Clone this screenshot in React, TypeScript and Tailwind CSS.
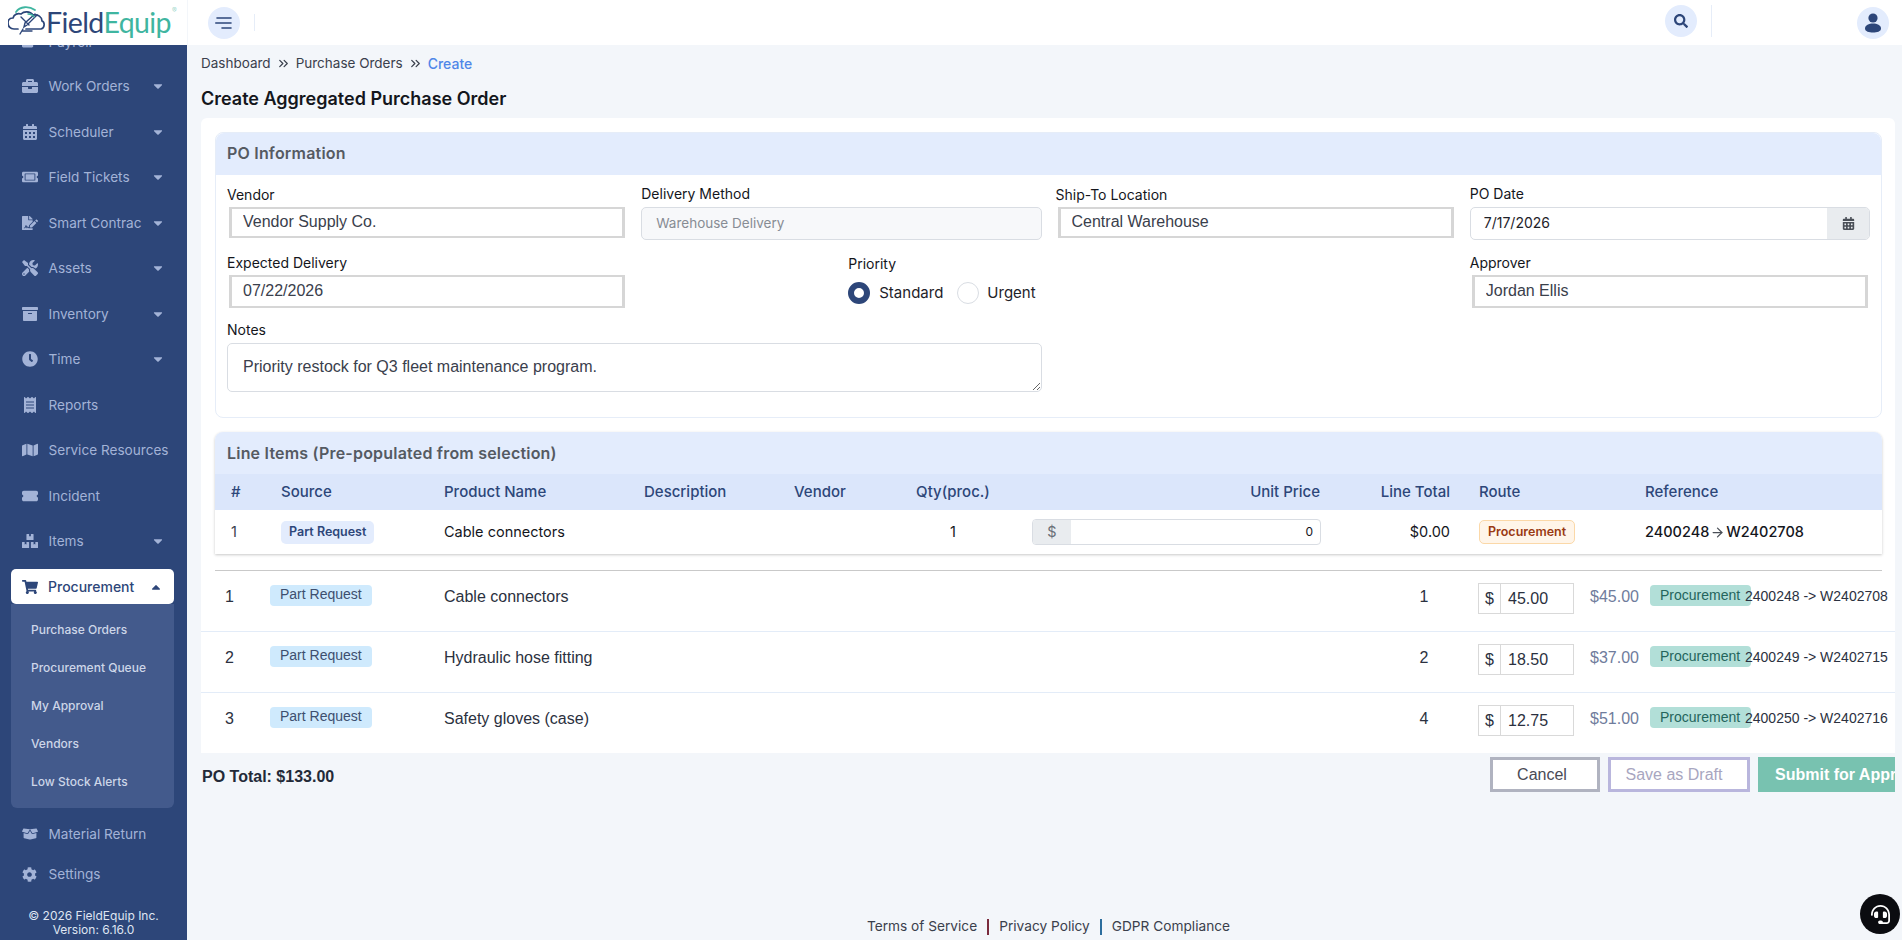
import React from 'react';
import {
  FaArchive,
  FaBoxes,
  FaBoxOpen,
  FaBriefcase,
  FaCalendarAlt,
  FaCaretDown,
  FaCaretUp,
  FaClock,
  FaCog,
  FaFileSignature,
  FaHeadset,
  FaMap,
  FaReceipt,
  FaSearch,
  FaShoppingCart,
  FaTicketAlt,
  FaTools,
  FaUserCheck,
} from 'react-icons/fa';
import { FaTicketSimple } from 'react-icons/fa6';
import { LuChevronsRight, LuArrowRight } from 'react-icons/lu';

const UI = "font-['Inter',sans-serif]";
const ARIAL = "font-['Liberation_Sans',Arial,sans-serif]";

const navTop = [
  { label: 'Work Orders', icon: FaBriefcase, caret: true },
  { label: 'Scheduler', icon: FaCalendarAlt, caret: true },
  { label: 'Field Tickets', icon: FaTicketAlt, caret: true },
  { label: 'Smart Contrac', icon: FaFileSignature, caret: true },
  { label: 'Assets', icon: FaTools, caret: true },
  { label: 'Inventory', icon: FaArchive, caret: true },
  { label: 'Time', icon: FaClock, caret: true },
  { label: 'Reports', icon: FaReceipt, caret: false },
  { label: 'Service Resources', icon: FaMap, caret: false },
  { label: 'Incident', icon: FaTicketSimple, caret: false },
  { label: 'Items', icon: FaBoxes, caret: true },
];

const subNav = ['Purchase Orders', 'Procurement Queue', 'My Approval', 'Vendors', 'Low Stock Alerts'];

const poLines = [
  { no: 1, name: 'Cable connectors', qty: 1, price: '45.00', total: '$45.00', ref: '2400248 -> W2402708' },
  { no: 2, name: 'Hydraulic hose fitting', qty: 2, price: '18.50', total: '$37.00', ref: '2400249 -> W2402715' },
  { no: 3, name: 'Safety gloves (case)', qty: 4, price: '12.75', total: '$51.00', ref: '2400250 -> W2402716' },
];

function Logo() {
  return (
    <div className="relative z-10 flex h-[45px] w-[187px] shrink-0 items-start overflow-hidden bg-white pl-[8px] pt-[5px]">
      <svg width="38" height="31" viewBox="0 0 38 31" fill="none" className="shrink-0">
        <path d="M8 7 C12 1 21 1 27 5" stroke="#3fb5a0" strokeWidth="1.8" strokeLinecap="round" />
        <path
          d="M10 24 H6 C2 24 0 21 0 18 C0 15 2 13 5 13 C6 9 10 8 13 9 C16 6 22 6 25 10 C30 9 34 12 34 16 C37 17 37 23 33 24 H18"
          stroke="#2d4679"
          strokeWidth="1.7"
          strokeLinecap="round"
        />
        <path d="M13 12 L21 20 M29 10 L19 20 L16 22 L17 18 L27 9" stroke="#2d4679" strokeWidth="1.4" strokeLinecap="round" />
        <path d="M20 9 C23 9 25 10 26 12" stroke="#3fb5a0" strokeWidth="1.4" strokeLinecap="round" />
        <path d="M14 26 H24 M12 29 L15 24" stroke="#2d4679" strokeWidth="1.4" strokeLinecap="round" />
      </svg>
      <span className="mt-[-1px] font-['Lato',sans-serif] text-[28.5px] leading-[36px] font-normal tracking-[-0.6px]">
        <span className="text-[#2d4679]">Field</span>
        <span className="text-[#3fb5a0]">Equip</span>
      </span>
      <span className="ml-[1px] mt-[1px] text-[7px] text-[#9fd8cd]">®</span>
    </div>
  );
}

function NavItem({ label, icon: Icon, caret }: { label: string; icon: React.ElementType; caret: boolean }) {
  return (
    <div className="flex h-[45.5px] items-center pl-[22px] pr-[22px] text-[#a3b3d7]">
      <span className="flex w-[26.5px] shrink-0 items-center">
        <Icon className="text-[16px]" />
      </span>
      <span className="flex-1 whitespace-nowrap text-[13.6px]">{label}</span>
      {caret && <FaCaretDown className="text-[14px]" />}
    </div>
  );
}

function Sidebar() {
  return (
    <aside className={`flex w-[187px] shrink-0 flex-col overflow-hidden ${UI}`}>
      <Logo />
      <nav className="flex h-[895px] flex-col overflow-hidden bg-[#2d4679]">
        {/* list is scrolled, only the foot of the first item shows under the logo */}
        <div className="flex h-[18.5px] shrink-0 items-end overflow-hidden pb-[15px] pl-[22px] text-[#a3b3d7]">
          <span className="flex w-[26.5px] shrink-0 items-center">
            <FaUserCheck className="text-[16px]" />
          </span>
          <span className="text-[13.6px] leading-[14px]">Payroll</span>
        </div>
        <div>
          {navTop.map((item) => (
            <NavItem key={item.label} {...item} />
          ))}
        </div>
        <div className="ml-[11px] mr-[13px] mt-[5px] flex h-[35px] shrink-0 items-center rounded-[5px] bg-white pl-[11px] pr-[11px] text-[#2d4679]">
          <FaShoppingCart className="mr-[10px] text-[16px]" />
          <span className="flex-1 text-[14px] font-medium">Procurement</span>
          <FaCaretUp className="text-[14px]" />
        </div>
        <div className="ml-[11px] mr-[13px] flex h-[204px] shrink-0 flex-col rounded-b-[6px] bg-[#435a8c] pl-[20px] pt-[7px]">
          {subNav.map((s) => (
            <div key={s} className="flex h-[38px] items-center text-[12px] font-medium text-[#cdd6e8]">
              {s}
            </div>
          ))}
        </div>
        <div className="mt-[4px]">
          <div className="flex h-[44px] items-center pl-[22px] text-[#a3b3d7]">
            <span className="flex w-[26.5px] items-center">
              <FaBoxOpen className="text-[16px]" />
            </span>
            <span className="text-[13.6px]">Material Return</span>
          </div>
          <div className="flex h-[36px] items-center pl-[22px] text-[#a3b3d7]">
            <span className="flex w-[26.5px] items-center">
              <FaCog className="text-[15px]" />
            </span>
            <span className="text-[13.6px]">Settings</span>
          </div>
        </div>
        <div className="mt-[17px] text-center text-[12px] leading-[14px] text-[#dfe5f2]">
          <div>© 2026 FieldEquip Inc.</div>
          <div>Version: 6.16.0</div>
        </div>
      </nav>
    </aside>
  );
}

function Header() {
  return (
    <header className="flex h-[45px] shrink-0 items-center border-l border-[#f3f6fa] bg-white pl-[20px] pr-[13px]">
      <div className="flex h-[32px] w-[32px] items-center justify-center rounded-full bg-[#e3ecfd]">
        <svg width="18" height="12" viewBox="0 0 18 12" fill="none" stroke="#2d4679" strokeWidth="1.6" strokeLinecap="round">
          <path d="M2 1 H16 M0.8 6 H16 M7 11 H16" />
        </svg>
      </div>
      <div className="ml-[14px] h-[17px] w-px bg-[#e6edf8]" />
      <div className="flex-1" />
      <div className="mb-[4px] flex h-[32px] w-[32px] items-center justify-center rounded-full bg-[#e3ecfd] text-[#2d4679]">
        <FaSearch className="text-[14px]" />
      </div>
      <div className="mb-[4px] ml-[14px] h-[32px] w-px bg-[#e6edf8]" />
      <div className="ml-[145px] flex h-[32px] w-[32px] items-center justify-center rounded-full bg-[#e3ecfd]">
        <svg width="18" height="20" viewBox="0 0 18 20" fill="#2d4679">
          <circle cx="9" cy="5" r="4.6" />
          <path d="M1 15.5 C1 12 5 10.5 9 10.5 C13 10.5 17 12 17 15.5 C17 18.5 13 19.5 9 19.5 C5 19.5 1 18.5 1 15.5 Z" />
        </svg>
      </div>
    </header>
  );
}

function Label({ children, className = '' }: { children: React.ReactNode; className?: string }) {
  return <div className={`h-[20px] text-[14px] leading-[20px] text-[#14161c] ${className}`}>{children}</div>;
}

function PlainInput({ value, tall = false }: { value: string; tall?: boolean }) {
  return (
    <input
      readOnly
      value={value}
      className={`mx-[2px] block w-[396px] border-x-[3px] border-y-2 border-[#d6d6d6] bg-white pl-[11px] text-[16px] text-[#3a404c] outline-none ${
        tall ? 'h-[33px] pb-[2px]' : 'h-[31px] pb-[1px]'
      } ${ARIAL}`}
    />
  );
}

function PoInformation() {
  return (
    <section className="rounded-[8px] border border-[#e6edf8] bg-white">
      <div className="flex h-[42px] items-center rounded-t-[8px] bg-[#e3ecfd] pb-[2px] pl-[11px] text-[16px] font-semibold tracking-[0.2px] text-[#555a62]">
        PO Information
      </div>
      <div className="grid grid-cols-4 gap-x-[14px] px-[11px] pb-[25px] pt-[10px]">
        <div>
          <Label className="mb-[2px]">Vendor</Label>
          <PlainInput value="Vendor Supply Co." />
        </div>
        <div>
          <Label className="mb-[3px] mt-[-1px]">Delivery Method</Label>
          <input
            readOnly
            value="Warehouse Delivery"
            className="block h-[33px] w-full rounded-[5px] border border-[#d9dde3] bg-[#f7f8fa] pb-[2px] pl-[14px] text-[13.5px] text-[#878c94] outline-none"
          />
        </div>
        <div>
          <Label className="mb-[2px]">Ship-To Location</Label>
          <PlainInput value="Central Warehouse" />
        </div>
        <div>
          <Label className="mb-[3px] mt-[-1px]">PO Date</Label>
          <div className="flex h-[33px] overflow-hidden rounded-[5px] border border-[#d9dde3]">
            <input readOnly value="7/17/2026" className="min-w-0 flex-1 pb-[2px] pl-[13px] text-[14px] text-[#1e2229] outline-none" />
            <div className="flex w-[42px] items-center justify-center bg-[#e9ecef] text-[#4a4f57]">
              <FaCalendarAlt className="text-[13px]" />
            </div>
          </div>
        </div>

        <div className="mt-[13px]">
          <Label className="mb-[2px]">Expected Delivery</Label>
          <PlainInput value="07/22/2026" tall />
        </div>
        <div className="mt-[13px] pl-[207px]">
          <Label className="mt-[1px]">Priority</Label>
          <div className="mt-[8px] flex items-center text-[15px] text-[#1e2229]">
            <span className="h-[22px] w-[22px] shrink-0 rounded-full border-[6px] border-[#2d4679] bg-white" />
            <span className="ml-[9px]">Standard</span>
            <span className="ml-[14px] h-[22px] w-[22px] shrink-0 rounded-full border border-[#d9dde3] bg-white" />
            <span className="ml-[8px]">Urgent</span>
          </div>
        </div>
        <div className="mt-[13px]" />
        <div className="mt-[13px]">
          <Label className="mb-[2px]">Approver</Label>
          <PlainInput value="Jordan Ellis" tall />
        </div>

        <div className="col-span-2 mt-[12px]">
          <Label className="mb-[3px]">Notes</Label>
          <textarea
            readOnly
            value="Priority restock for Q3 fleet maintenance program."
            className={`block h-[49px] w-full rounded-[5px] border border-[#d9dde3] pb-[11px] pl-[15px] pt-[12px] text-[16px] leading-[22px] text-[#3a404c] outline-none ${ARIAL}`}
          />
        </div>
      </div>
    </section>
  );
}

function LineItemsTable() {
  return (
    <section className="mt-[14px] rounded-t-[8px] bg-white shadow-[0_1px_3px_rgba(0,0,0,0.22)]">
      <div className="flex h-[42px] items-center rounded-t-[8px] bg-[#e3ecfd] pb-[1px] pl-[12px] text-[16px] font-semibold tracking-[0.2px] text-[#555a62]">
        Line Items (Pre-populated from selection)
      </div>
      <table className="w-full table-fixed border-collapse text-[14.5px]">
        <colgroup>
          <col className="w-[54px]" />
          <col className="w-[163px]" />
          <col className="w-[200px]" />
          <col className="w-[150px]" />
          <col className="w-[111px]" />
          <col className="w-[120px]" />
          <col className="w-[319px]" />
          <col className="w-[135px]" />
          <col className="w-[166px]" />
          <col />
        </colgroup>
        <thead>
          <tr className="h-[36px] bg-[#dbe6fb] text-left text-[15px] text-[#2d4679]">
            <th className="pl-[16px] font-medium">#</th>
            <th className="pl-[12px] font-medium">Source</th>
            <th className="pl-[12px] font-medium">Product Name</th>
            <th className="pl-[12px] font-medium">Description</th>
            <th className="pl-[12px] font-medium">Vendor</th>
            <th className="text-center font-medium">Qty(proc.)</th>
            <th className="pr-[12px] text-right font-medium">Unit Price</th>
            <th className="pr-[17px] text-right font-medium">Line Total</th>
            <th className="pl-[12px] font-medium">Route</th>
            <th className="pl-[12px] font-medium">Reference</th>
          </tr>
        </thead>
        <tbody>
          <tr className="h-[44px] text-[#14161c]">
            <td className="pl-[16px] text-[#3a404c]">1</td>
            <td className="pl-[12px]">
              <span className="inline-block rounded-[5px] bg-[#e3ecfd] px-[8px] py-[2px] text-[12.5px] font-semibold text-[#2d4679]">
                Part Request
              </span>
            </td>
            <td className="pl-[12px]">Cable connectors</td>
            <td />
            <td />
            <td className="text-center">1</td>
            <td className="pl-[19px] pr-[11px]">
              <div className="flex h-[26px] overflow-hidden rounded-[4px] border border-[#d9dde3]">
                <span className="flex w-[38px] items-center justify-center bg-[#e9ecef] text-[#6a6f77]">$</span>
                <span className="flex flex-1 items-center justify-end pr-[7px] text-[12px]">0</span>
              </div>
            </td>
            <td className="pr-[17px] text-right">$0.00</td>
            <td className="pl-[12px]">
              <span className="inline-block rounded-[5px] border border-[#fbd8a8] bg-[#fff5e9] px-[8px] py-[2px] text-[12.5px] font-semibold text-[#9a3a12]">
                Procurement
              </span>
            </td>
            <td className="pl-[12px]">
              <span className="inline-flex items-center font-medium">
                2400248
                <LuArrowRight className="mx-[1px] text-[15px] text-[#4a4f57]" />
                W2402708
              </span>
            </td>
          </tr>
        </tbody>
      </table>
    </section>
  );
}

function PoLines() {
  return (
    <div className={`ml-[-14px] mr-[-13px] ${ARIAL}`}>
      <div className="ml-[14px] mr-[13px] h-px bg-[#c9c9c9]" />
      {poLines.map((l, i) => (
        <div key={l.no} className={`flex items-start ${i === 0 ? 'h-[60px]' : 'h-[61px] border-t border-[#e3ecf8]'}`}>
          <span className="ml-[24px] mt-[16px] w-[45px] shrink-0 text-[16px] leading-[20px] text-[#2b3140]">{l.no}</span>
          <span className="mt-[14px] w-[174px] shrink-0">
            <span className="block h-[21px] w-[102px] rounded-[4px] bg-[#cfeafd] pl-[10px] text-[14px] leading-[19px] text-[#3d4f6f]">
              Part Request
            </span>
          </span>
          <span className="mt-[16px] w-[950px] shrink-0 text-[16px] leading-[20px] text-[#2b3140]">{l.name}</span>
          <span className="mt-[16px] w-[60px] shrink-0 text-center text-[16px] leading-[20px] text-[#2b3140]">{l.qty}</span>
          <div className="ml-[24px] mt-[12px] flex h-[31px] w-[96px] shrink-0 border border-[#d9d9d9] text-[16px] text-[#2b3140]">
            <span className="flex w-[22px] items-center justify-center border-r border-[#d9d9d9]">$</span>
            <span className="flex items-center pl-[7px]">{l.price}</span>
          </div>
          <span className="ml-[16px] mt-[16px] w-[60px] shrink-0 text-[16px] leading-[20px] text-[#6f7c9c]">{l.total}</span>
          <span className="mt-[14px] h-[21px] w-[101px] shrink-0 rounded-[4px] bg-[#b2dfd8] pl-[10px] text-[14px] leading-[20px] whitespace-nowrap text-[#24655c]">
            Procurement
          </span>
          <span className="relative ml-[-6px] mt-[15px] text-[14px] leading-[20px] whitespace-nowrap text-[#2b3140]">{l.ref}</span>
        </div>
      ))}
    </div>
  );
}

function ActionBar() {
  return (
    <div className={`flex items-start pr-[1px] pt-[4px] ${ARIAL}`}>
      <div className="ml-[1px] mt-[8px] text-[16px] font-bold text-[#232a38]">PO Total: $133.00</div>
      <div className="flex-1" />
      <button className="h-[35px] w-[110px] border-[3px] border-[#b0b3c0] bg-white pr-[6px] text-[16px] text-[#4a4a55]">Cancel</button>
      <button className="ml-[8px] h-[35px] w-[142px] border-[3px] border-[#b9b6dd] bg-white pr-[10px] text-[16px] text-[#a8a6c0]">Save as Draft</button>
      <div className="ml-[8px] h-[35px] w-[137px] overflow-hidden">
        <button className="h-[35px] w-[170px] bg-[#78c2b0] pl-[2px] text-left text-[16px] font-bold whitespace-nowrap text-white">
          <span className="pl-[15px]">Submit for Approval</span>
        </button>
      </div>
    </div>
  );
}

function Footer() {
  return (
    <footer className="flex flex-1 items-end justify-center pb-[3px] text-[13.7px] text-[#3a404c]">
      <span>Terms of Service</span>
      <span className="mx-[10px] mb-[2px] h-[16px] w-[2px] bg-[#7a2b3d]" />
      <span>Privacy Policy</span>
      <span className="mx-[10px] mb-[2px] h-[16px] w-[2px] bg-[#2d6e9e]" />
      <span>GDPR Compliance</span>
    </footer>
  );
}

export default function App() {
  return (
    <div className={`relative flex h-[940px] w-[1902px] overflow-hidden bg-[#f3f6fa] ${UI}`}>
      <Sidebar />
      <div className="flex min-w-0 flex-1 flex-col">
        <Header />
        <main className="flex flex-1 flex-col pl-[14px] pr-[6px]">
          <div className="flex h-[36px] items-center text-[13.5px] text-[#3a404c]">
            <span>Dashboard</span>
            <LuChevronsRight className="mx-[5px] text-[15px]" />
            <span>Purchase Orders</span>
            <LuChevronsRight className="mx-[5px] text-[15px]" />
            <span className="text-[14px] font-medium text-[#4f86e8]">Create</span>
          </div>
          <h1 className="h-[37px] pt-[5px] text-[18px] leading-[26px] font-semibold text-[#14161c]">Create Aggregated Purchase Order</h1>
          <div className="mr-[1px] rounded-t-[6px] bg-white pl-[14px] pr-[13px] pt-[14px]">
            <PoInformation />
            <LineItemsTable />
            <div className="h-[16px]" />
            <PoLines />
          </div>
          <ActionBar />
          <Footer />
        </main>
      </div>
      <div className="absolute bottom-[6px] right-[2px] flex h-[40px] w-[40px] items-center justify-center rounded-full bg-[#0b0c10] text-white">
        <FaHeadset className="text-[19px]" />
      </div>
    </div>
  );
}
